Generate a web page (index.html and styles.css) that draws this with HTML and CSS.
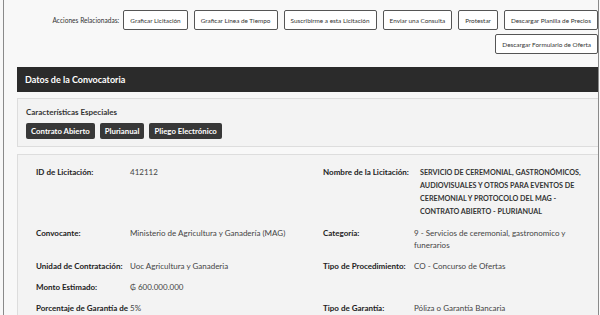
FILE: index.html
```html
<!DOCTYPE html>
<html lang="es">
<head>
    <meta charset="UTF-8">
    <meta name="viewport" content="width=device-width, initial-scale=1.0">
    <title>Datos de la Convocatoria</title>
    <link rel="stylesheet" href="styles.css">
</head>
<body>
    <div class="page">
        <div class="actions">
            <span class="actions-label">Acciones Relacionadas:</span>
            <button class="action-btn">Graficar Licitación</button>
            <button class="action-btn">Graficar Línea de Tiempo</button>
            <button class="action-btn">Suscribirme a esta Licitación</button>
            <button class="action-btn">Enviar una Consulta</button>
            <button class="action-btn">Protestar</button>
            <button class="action-btn">Descargar Planilla de Precios</button>
            <button class="action-btn">Descargar Formulario de Oferta</button>
        </div>

        <div class="panel">
            <div class="panel-heading">Datos de la Convocatoria</div>

            <div class="features">
                <div class="features-title">Características Especiales</div>
                <div class="badges">
                    <span class="badge">Contrato Abierto</span>
                    <span class="badge">Plurianual</span>
                    <span class="badge">Pliego Electrónico</span>
                </div>
            </div>

            <div class="details">
                <div class="label">ID de Licitación:</div>
                <div class="value">412112</div>
                <div class="label">Nombre de la Licitación:</div>
                <div class="value title">SERVICIO DE CEREMONIAL, GASTRONÓMICOS, AUDIOVISUALES Y OTROS PARA EVENTOS DE CEREMONIAL Y PROTOCOLO DEL MAG - CONTRATO ABIERTO - PLURIANUAL</div>

                <div class="label">Convocante:</div>
                <div class="value">Ministerio de Agricultura y Ganadería (MAG)</div>
                <div class="label">Categoría:</div>
                <div class="value">9 - Servicios de ceremonial, gastronomico y funerarios</div>

                <div class="label">Unidad de Contratación:</div>
                <div class="value">Uoc Agricultura y Ganaderia</div>
                <div class="label">Tipo de Procedimiento:</div>
                <div class="value">CO - Concurso de Ofertas</div>

                <div class="label">Monto Estimado:</div>
                <div class="value">₲ 600.000.000</div>
                <div class="label"></div>
                <div class="value"></div>

                <div class="label">Porcentaje de Garantía de</div>
                <div class="value">5%</div>
                <div class="label">Tipo de Garantía:</div>
                <div class="value">Póliza o Garantía Bancaria</div>
            </div>
        </div>
    </div>
</body>
</html>
```

FILE: styles.css
```css
body {
    margin: 0;
    font-family: Lato, "Open Sans", sans-serif;
    background-color: #f8f8f8;
    color: #222;
    overflow: hidden;
}
.page {
    margin-left: 3px;
    width: 596px;
    height: 315px;
    border-left: 1px solid #8a8a8a;
    border-right: 1px solid #8a8a8a;
    padding-left: 13px;
    box-sizing: border-box;
}
.actions {
    display: flex;
    flex-wrap: wrap;
    justify-content: flex-end;
    align-items: center;
    gap: 4px 6px;
    padding-top: 10px;
}
.actions-label {
    font-size: 6.6px;
    color: #333;
    margin-right: -2px;
}
.action-btn {
    height: 20px;
    padding: 0 6px;
    font-family: Lato, sans-serif;
    font-size: 6.4px;
    color: #333;
    background-color: #fff;
    border: 1px solid #555;
    border-radius: 2px;
}
.panel {
    margin-top: 13px;
}
.panel-heading {
    height: 25px;
    line-height: 25px;
    padding-left: 8px;
    background-color: #2b2b2b;
    color: #fff;
    font-size: 9px;
    font-weight: bold;
}
.features {
    margin-top: 6px;
    padding: 8px 8px 7px;
    background-color: #f3f3f3;
    border: 1px solid #ddd;
    border-right: none;
}
.features-title {
    font-size: 8px;
    font-weight: bold;
    color: #333;
    line-height: 10px;
}
.badges {
    display: flex;
    gap: 5px;
    margin-top: 6px;
}
.badge {
    height: 16px;
    line-height: 16px;
    padding: 0 5px;
    background-color: #383838;
    color: #fff;
    font-size: 7.8px;
    font-weight: bold;
    border-radius: 2px;
}
.details {
    margin-top: 7px;
    padding: 7px 8px 0 18px;
    background-color: #f3f3f3;
    border: 1px solid #ddd;
    border-right: none;
    display: grid;
    grid-template-columns: 94px 193px 91px 1fr;
}
.label, .value {
    padding: 4px 0 5px;
    font-size: 8px;
    line-height: 12px;
}
.label {
    font-weight: bold;
    color: #222;
}
.value {
    color: #444;
}
.value.title {
    padding-left: 6px;
    font-size: 7.2px;
    font-weight: bold;
    color: #333;
    line-height: 13px;
}
```
